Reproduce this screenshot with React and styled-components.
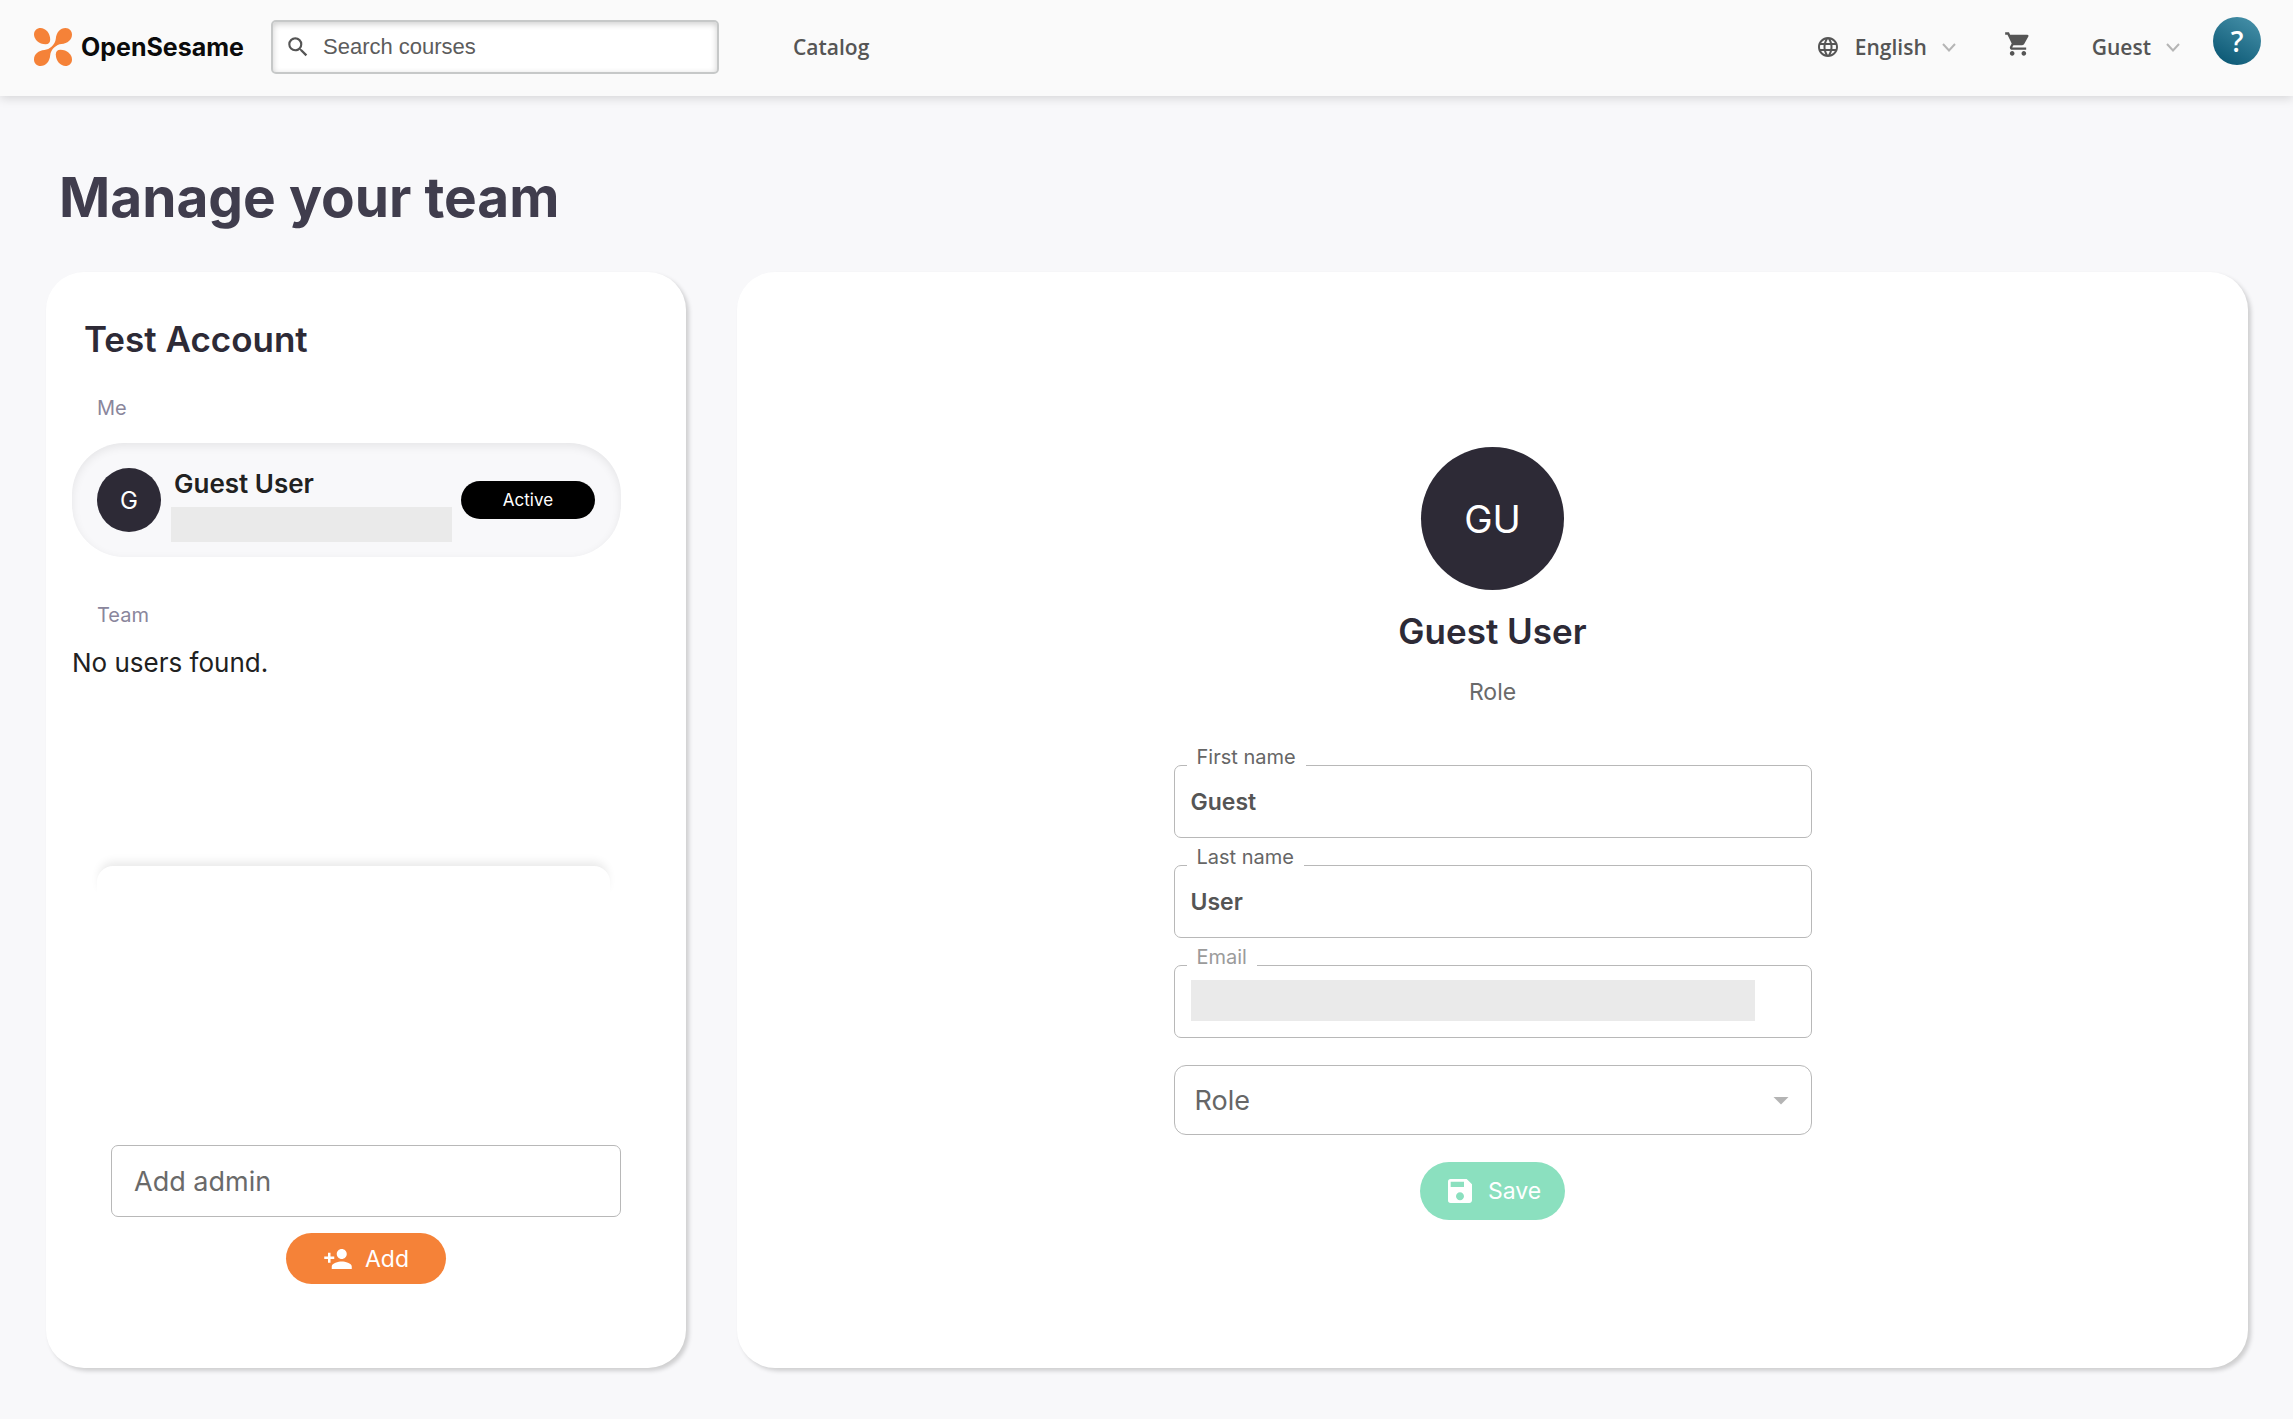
import React from "react";
import styled, { createGlobalStyle } from "styled-components";
import {
  MdSearch,
  MdLanguage,
  MdShoppingCart,
  MdPersonAdd,
  MdSave,
  MdArrowDropDown,
} from "react-icons/md";

const GlobalStyle = createGlobalStyle`
  *, *::before, *::after { box-sizing: border-box; }
  body {
    margin: 0;
    background: #f8f8fa;
    color: #212121;
    font-family: Inter, "Open Sans", sans-serif;
  }
  button, input, select { font-family: inherit; margin: 0; }
  h1, h2, h3, p { margin: 0; }
`;

const Header = styled.header`
  display: flex;
  align-items: center;
  height: 96px;
  padding: 0 32px 2px 34px;
  background: #fafafa;
  box-shadow: 0 2px 10px rgba(0, 0, 0, 0.15);
  font-family: "Open Sans", sans-serif;
`;

const Brand = styled.a`
  display: flex;
  align-items: center;
  gap: 9px;
  width: 237px;
  color: #0b0b0b;
  text-decoration: none;
  font: 700 25px/36px Inter, sans-serif;
`;

const SearchBox = styled.label`
  display: flex;
  align-items: center;
  gap: 12px;
  width: 448px;
  height: 54px;
  padding: 0 12px;
  color: #555;
  background: #fff;
  border: 2px solid #c6c8c8;
  border-radius: 5px;
  box-shadow: inset 0 2px 6px rgba(0, 0, 0, 0.2);
`;

const SearchInput = styled.input`
  flex: 1;
  min-width: 0;
  padding: 0;
  border: 0;
  outline: 0;
  background: transparent;
  color: #555;
  font: 400 22px/32px "Liberation Sans", Arial, sans-serif;
  &::placeholder { color: #5c5c5c; opacity: 1; }
`;

const NavLink = styled.a`
  margin-left: 74px;
  color: #555;
  text-decoration: none;
  font-size: 21px;
  font-weight: 600;
  line-height: 28px;
`;

const Actions = styled.div`
  display: flex;
  align-items: center;
  margin-left: auto;
`;

const MenuButton = styled.button`
  display: flex;
  align-items: center;
  gap: 15px;
  padding: 0;
  border: 0;
  background: none;
  color: #555;
  font-size: 21px;
  font-weight: 600;
  line-height: 28px;
`;

const CartButton = styled.button`
  display: flex;
  margin: 0 60px 6px 48px;
  padding: 0;
  border: 0;
  background: none;
  color: #555;
`;

const HelpButton = styled.button`
  width: 48px;
  height: 48px;
  margin: 0 0 12px 33px;
  padding: 0;
  border: 0;
  border-radius: 50%;
  color: #fff;
  background: linear-gradient(210deg, #4a94ac, #05526f);
  font-size: 28px;
  font-weight: 600;
  line-height: 48px;
`;

const Main = styled.main`
  padding: 61px 45px 51px 46px;
`;

const PageTitle = styled.h1`
  margin: 0 0 35px 13px;
  color: #403d4d;
  font-size: 55px;
  font-weight: 700;
  line-height: 80px;
`;

const Columns = styled.div`
  display: grid;
  grid-template-columns: 640px minmax(0, 1fr);
  gap: 51px;
`;

const Card = styled.section`
  background: #fff;
  border-radius: 38px;
  box-shadow: 3px 3px 4px rgba(0, 0, 0, 0.17);
`;

const TeamCard = styled(Card)`
  padding: 43px 65px 84px 26px;
`;

const ProfileCard = styled(Card)`
  display: flex;
  flex-direction: column;
  align-items: center;
  justify-content: center;
  padding: 27px 32px 0;
`;

const CardTitle = styled.h2`
  margin: ${(p) => p.$space};
  color: #2d2a36;
  font-size: 35px;
  font-weight: 600;
  line-height: 48px;
`;

const GroupLabel = styled.h3`
  margin: ${(p) => p.$space} 0 0 25px;
  color: #8a869c;
  font-size: 20px;
  font-weight: 400;
  line-height: 30px;
`;

const UserRow = styled.div`
  display: flex;
  align-items: center;
  height: 114px;
  margin-top: 20px;
  padding: 0 26px 0 25px;
  border-radius: 52px;
  background: #f8f8fa;
  box-shadow: inset 0 3px 10px rgba(0, 0, 0, 0.08);
`;

const Avatar = styled.span`
  display: flex;
  flex: none;
  align-items: center;
  justify-content: center;
  width: ${(p) => p.$size}px;
  height: ${(p) => p.$size}px;
  border-radius: 50%;
  background: #2d2a36;
  color: #fff;
  font-size: ${(p) => p.$font}px;
`;

const UserInfo = styled.div`
  flex: 1;
  margin: 0 9px 0 10px;
`;

const UserName = styled.p`
  padding: 2px 0 0 3px;
  font-size: 26px;
  font-weight: 600;
  line-height: 46px;
`;

const Redacted = styled.div`
  height: 35px;
  background: #eaeaea;
`;

const StatusButton = styled.button`
  width: 134px;
  height: 38px;
  border: 0;
  border-radius: 19px;
  background: #000;
  color: #fff;
  font-size: 17px;
`;

const TeamList = styled.div`
  min-height: 223px;
  margin-top: 13px;
  font-size: 26px;
  line-height: 40px;
`;

const ListEdge = styled.div`
  height: 32px;
  margin: 0 11px 0 25px;
  border-radius: 16px 16px 0 0;
  background: #fff;
  box-shadow: 0 -7px 10px -3px rgba(0, 0, 0, 0.09);
`;

const AddForm = styled.form`
  display: flex;
  flex-direction: column;
  align-items: center;
  gap: 16px;
  padding: 247px 0 0 39px;
`;

const AdminInput = styled.input`
  width: 100%;
  height: 72px;
  padding: 0 22px;
  border: 1px solid #b8b8b8;
  border-radius: 7px;
  background: #fff;
  color: #333;
  font-size: 27px;
  &::placeholder { color: #6a6a6a; opacity: 1; }
`;

const ActionButton = styled.button`
  display: flex;
  align-items: center;
  justify-content: center;
  gap: ${(p) => p.$gap}px;
  width: ${(p) => p.$width}px;
  height: ${(p) => p.$height}px;
  padding: 0;
  border: 0;
  border-radius: 29px;
  background: ${(p) => p.$color};
  color: #fff;
  font-size: 23px;
`;

const RoleText = styled.p`
  margin: 19px 0 55px;
  color: #6a6a6a;
  font-size: 23px;
  line-height: 36px;
`;

const ProfileForm = styled.form`
  display: flex;
  flex-direction: column;
  align-items: center;
  gap: 27px;
  width: 100%;
  max-width: 638px;
`;

const Field = styled.div`
  position: relative;
  width: 100%;
`;

const FieldLabel = styled.label`
  position: absolute;
  top: -20px;
  left: 13px;
  padding: 0 10px;
  background: #fff;
  color: ${(p) => (p.$muted ? "#9b9b9b" : "#666")};
  font-size: 20px;
  line-height: 24px;
`;

const FieldInput = styled.input`
  display: block;
  width: 100%;
  height: 73px;
  padding: 0 16px;
  border: 1px solid #b8b8b8;
  border-radius: 7px;
  background: #fff;
  color: #555;
  font-size: 23px;
  font-weight: 600;
`;

const FieldMask = styled.div`
  position: absolute;
  top: 15px;
  left: 17px;
  right: 57px;
  height: 41px;
  background: #eaeaea;
`;

const RoleSelect = styled.select`
  display: block;
  width: 100%;
  height: 70px;
  padding: 0 20px;
  border: 1px solid #b8b8b8;
  border-radius: 12px;
  background: #fff;
  color: #666;
  font-size: 27px;
  appearance: none;
`;

const SelectArrow = styled(MdArrowDropDown)`
  position: absolute;
  top: 17px;
  right: 13px;
  color: #b4b4b4;
  pointer-events: none;
`;

function LogoMark() {
  return (
    <svg width="38" height="38" viewBox="0 0 38 38" fill="#f58238" aria-hidden="true">
      <path d="M0 6.500C0 2.500 3 0 6.500 0C11.500 0 16.200 5 16.200 11.500C16.200 14.600 14.700 16.200 11.500 16.200C5 16.200 0 11.500 0 6.500Z" />
      <path d="M38 31.500C38 35.500 35 38 31.500 38C26.500 38 21.800 33 21.800 26.500C21.800 23.400 23.300 21.800 26.500 21.800C33 21.800 38 26.500 38 31.500Z" />
      <path d="M31.500 0C35.500 0 38 3 38 6.500C38 11.800 33.500 15.600 27.500 16C22.500 16.400 16.800 21.200 16.200 27.200C15.700 33.500 11.800 38 6.500 38C3 38 0 35.500 0 31.500C0 26.200 4.500 22.400 10.500 22C15.500 21.600 21.200 16.800 21.800 10.800C22.300 4.500 26.200 0 31.500 0Z" />
    </svg>
  );
}

function Chevron() {
  return (
    <svg width="14" height="9" viewBox="0 0 14 9" fill="none" stroke="#b5b5b5" strokeWidth="2" aria-hidden="true">
      <path d="M1 1L7 7.500L13 1" />
    </svg>
  );
}

function TextField({ id, label, value, disabled, children }) {
  return (
    <Field>
      <FieldInput id={id} defaultValue={value} disabled={disabled} />
      <FieldLabel htmlFor={id} $muted={disabled}>{label}</FieldLabel>
      {children}
    </Field>
  );
}

export default function App() {
  return (
    <>
      <GlobalStyle />
      <Header>
        <Brand href="#"><LogoMark />OpenSesame</Brand>
        <SearchBox>
          <MdSearch size={26} />
          <SearchInput type="text" placeholder="Search courses" aria-label="Search courses" />
        </SearchBox>
        <NavLink href="#">Catalog</NavLink>
        <Actions>
          <MenuButton type="button"><MdLanguage size={24} />English<Chevron /></MenuButton>
          <CartButton type="button" aria-label="Cart"><MdShoppingCart size={28} /></CartButton>
          <MenuButton type="button">Guest<Chevron /></MenuButton>
          <HelpButton type="button">?</HelpButton>
        </Actions>
      </Header>
      <Main>
        <PageTitle>Manage your team</PageTitle>
        <Columns>
          <TeamCard>
            <CardTitle $space="0 0 0 12px">Test Account</CardTitle>
            <GroupLabel $space="30px">Me</GroupLabel>
            <UserRow>
              <Avatar $size={64} $font={24}>G</Avatar>
              <UserInfo>
                <UserName>Guest User</UserName>
                <Redacted />
              </UserInfo>
              <StatusButton type="button">Active</StatusButton>
            </UserRow>
            <GroupLabel $space="43px">Team</GroupLabel>
            <TeamList>No users found.</TeamList>
            <ListEdge />
            <AddForm>
              <AdminInput type="text" placeholder="Add admin" aria-label="Add admin" />
              <ActionButton type="button" $width={160} $height={51} $gap={12} $color="#f58238">
                <MdPersonAdd size={30} />Add
              </ActionButton>
            </AddForm>
          </TeamCard>
          <ProfileCard>
            <Avatar $size={143} $font={38}>GU</Avatar>
            <CardTitle $space="17px 0 0">Guest User</CardTitle>
            <RoleText>Role</RoleText>
            <ProfileForm>
              <TextField id="first-name" label="First name" value="Guest" />
              <TextField id="last-name" label="Last name" value="User" />
              <TextField id="email" label="Email" value="" disabled><FieldMask /></TextField>
              <Field>
                <RoleSelect aria-label="Role" defaultValue="role">
                  <option value="role">Role</option>
                </RoleSelect>
                <SelectArrow size={36} />
              </Field>
              <ActionButton type="button" $width={145} $height={58} $gap={12} $color="#8be0bf">
                <MdSave size={32} />Save
              </ActionButton>
            </ProfileForm>
          </ProfileCard>
        </Columns>
      </Main>
    </>
  );
}
